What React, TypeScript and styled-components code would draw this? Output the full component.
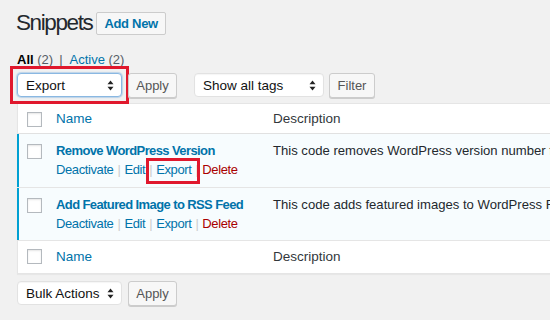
import React from 'react';
import styled, { createGlobalStyle } from 'styled-components';

const GlobalStyle = createGlobalStyle`
  html, body {
    margin: 0;
    padding: 0;
    background: #f1f1f1;
    overflow: hidden;
  }
  body {
    font-family: "Liberation Sans", Arial, sans-serif;
    font-size: 13px;
    color: #32373c;
  }
`;

const Wrap = styled.div`
  padding: 8px 0 0 17px;
  width: 600px;
`;

const Header = styled.div`
  display: flex;
  align-items: center;
  gap: 4px;
`;

const Title = styled.h1`
  margin: 0 0 0 -1px;
  font-size: 22.5px;
  line-height: 29px;
  font-weight: 400;
  color: #23282d;
  letter-spacing: -1.4px;
`;

const PageAction = styled.a`
  display: inline-block;
  height: 23px;
  line-height: 21px;
  box-sizing: border-box;
  padding: 0 7px;
  margin-top: 1px;
  border: 1px solid #ccc;
  border-radius: 2px;
  background: #f7f7f7;
  color: #0073aa;
  font-weight: 700;
  font-size: 13px;
  letter-spacing: -0.3px;
`;

const Views = styled.div`
  margin-top: 14px;
  line-height: 18px;
  color: #555d66;
  font-size: 13px;
  b { color: #000; }
  a { color: #0073aa; }
`;

const Sep = styled.span`
  color: #555d66;
  margin: 0 7px 0 6px;
`;

const Nav = styled.div<{ $top: number }>`
  display: flex;
  align-items: center;
  gap: 6px;
  margin: ${p => p.$top}px 0 6px;
  height: 24px;
`;

const Group = styled.div<{ $gap?: number }>`
  display: flex;
  align-items: center;
  gap: ${p => p.$gap ?? 6}px;
  margin-right: 11px;
`;

const Highlight = styled.span`
  display: inline-flex;
  outline: 3px solid #e0182d;
  outline-offset: 4px;
`;

const SelectBox = styled.div<{ $w: number; $focus?: boolean }>`
  width: ${p => p.$w}px;
  height: 24px;
  box-sizing: border-box;
  display: flex;
  align-items: center;
  justify-content: space-between;
  padding: 0 7px 0 8px;
  background: #fff;
  border: 1px solid ${p => (p.$focus ? '#8ab8e2' : '#e2e2e2')};
  border-radius: 4px;
  box-shadow: ${p => (p.$focus ? '0 0 1px 1px rgba(91,157,217,.35)' : 'inset 0 1px 1px rgba(0,0,0,.04)')};
  color: #111;
  font-size: 13.5px;
`;

const Button = styled.button<{ $w: number }>`
  width: ${p => p.$w}px;
  height: 25px;
  box-sizing: border-box;
  padding: 0;
  background: #f7f7f7;
  border: 1px solid #ccc;
  border-radius: 3px;
  box-shadow: 0 1px 0 #ccc;
  color: #555;
  font-family: "Liberation Sans", Arial, sans-serif;
  font-size: 13px;
`;

const Arrows = () => (
  <svg width="7" height="11" viewBox="0 0 7 11">
    <path d="M3.5 0.5 L6.5 4.3 H0.5 Z" fill="#222" />
    <path d="M3.5 10.5 L6.5 6.7 H0.5 Z" fill="#222" />
  </svg>
);

const Select = ({ label, w, focus }: { label: string; w: number; focus?: boolean }) => (
  <SelectBox $w={w} $focus={focus}>
    <span>{label}</span>
    <Arrows />
  </SelectBox>
);

const Table = styled.div`
  background: #fff;
  border: 1px solid #e5e5e5;
  box-shadow: 0 1px 1px rgba(0, 0, 0, 0.04);
  width: 560px;
`;

const Row = styled.div<{ $active?: boolean; $h: number; $line?: string }>`
  display: grid;
  grid-template-columns: 38px 217px 1fr;
  height: ${p => p.$h}px;
  box-sizing: border-box;
  background: ${p => (p.$active ? '#f7fcfe' : '#fff')};
  border-bottom: 1px solid ${p => p.$line ?? 'transparent'};
  box-shadow: ${p => (p.$active ? 'inset 2px 0 0 #00a0d2' : 'none')};
  margin-left: ${p => (p.$active ? '-1px' : '0')};
  padding-left: ${p => (p.$active ? '1px' : '0')};
`;

const CheckCell = styled.div<{ $top: number }>`
  padding: ${p => p.$top}px 0 0 9px;
`;

const Check = styled.span`
  display: block;
  width: 15px;
  height: 15px;
  box-sizing: border-box;
  background: #fff;
  border: 1px solid #b4b9be;
  box-shadow: inset 0 1px 2px rgba(0, 0, 0, 0.1);
`;

const HeadCell = styled.div`
  display: flex;
  align-items: center;
  font-size: 13.5px;
  color: #32373c;
  a { color: #0073aa; }
`;

const Cell = styled.div`
  padding-top: 7px;
  line-height: 19px;
  font-size: 13px;
  white-space: nowrap;
`;

const RowTitle = styled.a`
  display: block;
  color: #0073aa;
  font-weight: 700;
  letter-spacing: -0.6px;
`;

const Actions = styled.div`
  display: flex;
  align-items: center;
  color: #0073aa;
  font-size: 13px;
  letter-spacing: -0.4px;
`;

const Pipe = styled.span`
  color: #ccc;
  margin: 0 4px;
`;

const Delete = styled.a`
  color: #a00;
`;

const ExportMark = styled.span`
  position: relative;
  &::after {
    content: '';
    position: absolute;
    left: -10px;
    right: -9px;
    top: -2px;
    bottom: -5px;
    border: 3px solid #e0182d;
  }
`;

const Desc = styled.div`
  padding-top: 7px;
  line-height: 19px;
  font-size: 13.1px;
  color: #23282d;
  white-space: nowrap;
`;

const snippets = [
  { name: 'Remove WordPress Version', desc: 'This code removes WordPress version number from your site', mark: true },
  { name: 'Add Featured Image to RSS Feed', desc: 'This code adds featured images to WordPress RSS feeds', mark: false },
];

const ColumnRow = ({ line }: { line?: string }) => (
  <Row $h={line ? 30 : 32} $line={line}>
    <CheckCell $top={8}><Check /></CheckCell>
    <HeadCell><a>Name</a></HeadCell>
    <HeadCell>Description</HeadCell>
  </Row>
);

export default function App() {
  return (
    <>
      <GlobalStyle />
      <Wrap>
        <Header>
          <Title>Snippets</Title>
          <PageAction>Add New</PageAction>
        </Header>
        <Views>
          <b>All</b> (2)<Sep>|</Sep><a>Active</a> (2)
        </Views>
        <Nav $top={4}>
          <Group>
            <Highlight><Select label="Export" w={105} focus /></Highlight>
            <Button $w={49}>Apply</Button>
          </Group>
          <Group $gap={5}>
            <Select label="Show all tags" w={130} />
            <Button $w={46}>Filter</Button>
          </Group>
        </Nav>
        <Table>
          <ColumnRow line="#e1e1e1" />
          {snippets.map((s, i) => (
            <Row key={s.name} $active $h={i === 0 ? 54 : 53} $line="#e5e5e5">
              <CheckCell $top={10}><Check /></CheckCell>
              <Cell>
                <RowTitle>{s.name}</RowTitle>
                <Actions>
                  <span>Deactivate</span>
                  <Pipe>|</Pipe>
                  <span>Edit</span>
                  <Pipe>|</Pipe>
                  {s.mark ? <ExportMark>Export</ExportMark> : <span>Export</span>}
                  <Pipe>|</Pipe>
                  <Delete>Delete</Delete>
                </Actions>
              </Cell>
              <Desc>{s.desc}</Desc>
            </Row>
          ))}
          <ColumnRow />
        </Table>
        <Nav $top={7}>
          <Group>
            <Select label="Bulk Actions" w={105} />
            <Button $w={49}>Apply</Button>
          </Group>
        </Nav>
      </Wrap>
    </>
  );
}
